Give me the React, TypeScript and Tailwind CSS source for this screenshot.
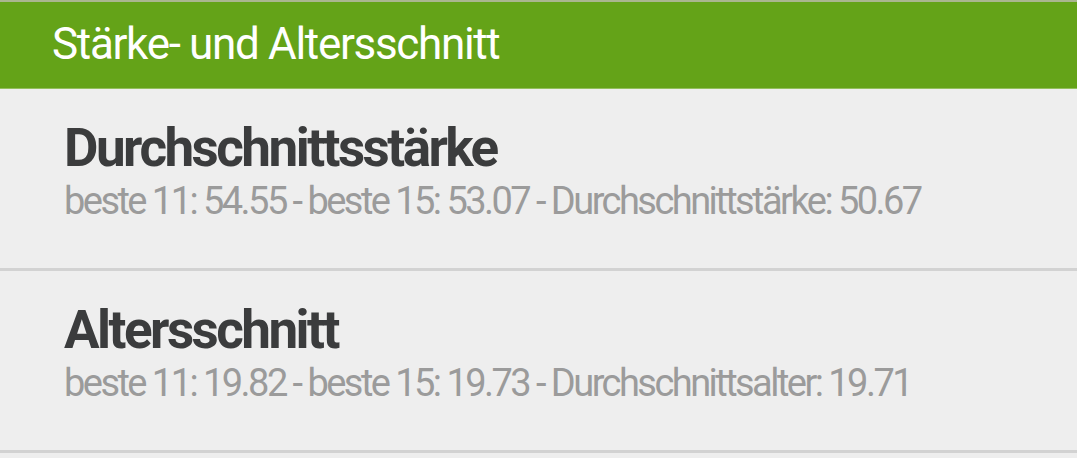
const rows = [
  {
    title: 'Durchschnittsstärke',
    detail: 'beste 11: 54.55 - beste 15: 53.07 - Durchschnittstärke: 50.67',
  },
  {
    title: 'Altersschnitt',
    detail: 'beste 11: 19.82 - beste 15: 19.73 - Durchschnittsalter: 19.71',
  },
];

export default function App() {
  return (
    <div className="h-[458px] w-[1077px] overflow-hidden bg-[#eeeeee] font-['Roboto',sans-serif]">
      <div className="h-[2px] bg-[#aab68f]" />
      <div className="flex h-[87px] items-center border-b border-[#93bf5c] bg-[#64a318] pl-[52px]">
        <h1 className="pb-[2px] text-[44px] leading-none tracking-[-0.03em] text-white">Stärke- und Altersschnitt</h1>
      </div>
      {rows.map((row) => (
        <div key={row.title} className="flex h-[182px] flex-col border-b-[3px] border-[#d2d2d2] pl-[64px] pt-[29px]">
          <div className="text-[53px] leading-[60px] font-bold tracking-[-0.048em] text-[#3b3c3d]">{row.title}</div>
          <div className="text-[38px] leading-[46px] tracking-[-0.067em] text-[#9b9b9b]">{row.detail}</div>
        </div>
      ))}
    </div>
  );
}
